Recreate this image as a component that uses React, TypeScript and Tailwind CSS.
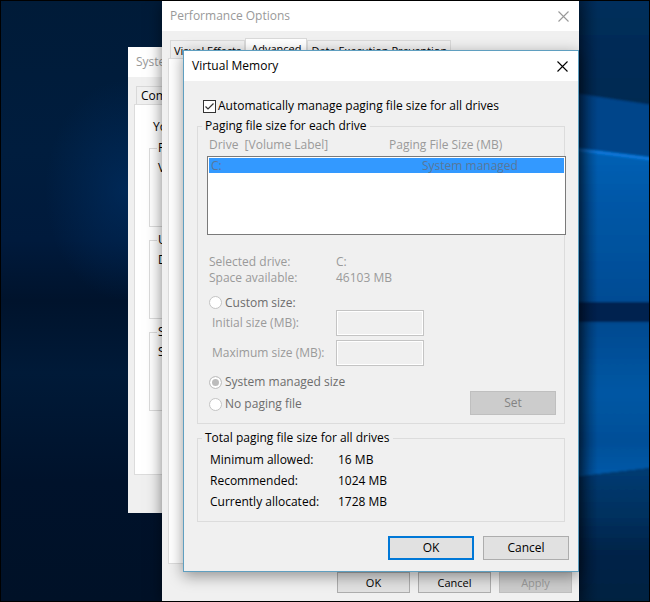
import { useState } from 'react';
import type { ReactNode } from 'react';

function Wallpaper() {
  return (
    <svg
      className="absolute inset-0 h-full w-full"
      viewBox="0 0 650 602"
      preserveAspectRatio="none"
      aria-hidden="true"
    >
      <defs>
        <linearGradient id="left" x1="0" y1="0" x2="0" y2="1">
          <stop offset="0" stopColor="#001b38" />
          <stop offset="0.25" stopColor="#001d3e" />
          <stop offset="0.4" stopColor="#001a3c" />
          <stop offset="0.5" stopColor="#00132c" />
          <stop offset="0.62" stopColor="#001a38" />
          <stop offset="0.8" stopColor="#00122b" />
          <stop offset="1" stopColor="#001127" />
        </linearGradient>
        <radialGradient id="leftGlow" cx="0.5" cy="0.5" r="0.5">
          <stop offset="0" stopColor="#003066" stopOpacity="0.6" />
          <stop offset="1" stopColor="#003066" stopOpacity="0" />
        </radialGradient>
        <linearGradient id="sky" x1="0" y1="0" x2="0" y2="1">
          <stop offset="0" stopColor="#002f5c" />
          <stop offset="1" stopColor="#002850" />
        </linearGradient>
        <linearGradient id="paneTop" x1="0" y1="0" x2="0" y2="1">
          <stop offset="0" stopColor="#0061b6" />
          <stop offset="0.4" stopColor="#0057a6" />
          <stop offset="1" stopColor="#004c94" />
        </linearGradient>
        <linearGradient id="paneBottom" x1="0" y1="0" x2="0" y2="1">
          <stop offset="0" stopColor="#004a90" />
          <stop offset="0.45" stopColor="#0057a4" />
          <stop offset="0.75" stopColor="#004f98" />
          <stop offset="0.95" stopColor="#0059a8" />
          <stop offset="1" stopColor="#0064b8" />
        </linearGradient>
        <linearGradient id="floor" x1="0" y1="0" x2="0" y2="1">
          <stop offset="0" stopColor="#003c74" />
          <stop offset="0.35" stopColor="#00305e" />
          <stop offset="0.6" stopColor="#002448" />
          <stop offset="1" stopColor="#001f40" />
        </linearGradient>
        <linearGradient id="edge" x1="0" y1="0" x2="1" y2="0">
          <stop offset="0" stopColor="#000a1c" stopOpacity="0.4" />
          <stop offset="1" stopColor="#000a1c" stopOpacity="0" />
        </linearGradient>
        <filter id="soften">
          <feGaussianBlur stdDeviation="1" />
        </filter>
      </defs>
      <rect width="650" height="602" fill="url(#left)" />
      <ellipse cx="125" cy="190" rx="80" ry="110" fill="url(#leftGlow)" />
      <g filter="url(#soften)">
        <rect x="540" y="-5" width="120" height="120" fill="url(#sky)" />
        <path d="M540 88 L660 106 V302 H540 Z" fill="#00458a" />
        <path d="M540 144 L660 159 V302 H540 Z" fill="url(#paneTop)" />
        <path d="M540 145 L660 160" stroke="#0a78dc" strokeWidth="3" />
        <rect x="540" y="302" width="120" height="20" fill="#002450" />
        <path d="M540 322 H660 V467 L540 481 Z" fill="url(#paneBottom)" />
        <path d="M540 481 L660 467 V610 H540 Z" fill="url(#floor)" />
      </g>
      <rect x="578" width="20" height="602" fill="url(#edge)" />
    </svg>
  );
}

function CloseButton({ muted = false }: { muted?: boolean }) {
  return (
    <button
      type="button"
      aria-label="Close"
      className={muted ? 'p-1 text-[#999999]' : 'p-1 text-black'}
    >
      <svg width="11" height="11" viewBox="0 0 11 11" fill="none" stroke="currentColor">
        <path d="M0.5 0.5 L10.5 10.5 M10.5 0.5 L0.5 10.5" strokeWidth="1.1" />
      </svg>
    </button>
  );
}

function Group({ title, className, children }: { title: string; className: string; children: ReactNode }) {
  return (
    <fieldset className={`min-w-0 border border-[#dcdcdc] pl-1 ${className}`}>
      <legend className="px-[3px] leading-5">{title}</legend>
      {children}
    </fieldset>
  );
}

function SystemGroup({ title, item }: { title: string; item: string }) {
  return (
    <fieldset className="mb-[3px] h-[89px] border border-[#dcdcdc] pl-[7px]">
      <legend className="px-px leading-5">{title}</legend>
      <p className="pl-px leading-5">{item}</p>
    </fieldset>
  );
}

function SystemProperties() {
  return (
    <section className="absolute left-32 top-[47px] w-96 bg-[#f0f0f0] pb-[38px]">
      <header className="flex h-[30px] items-center bg-white pl-2 text-[#999999]">
        System Properties
      </header>
      <div className="px-[6px] pt-[9px]">
        <div className="flex pl-[2px]">
          <button type="button" className="h-[18px] border border-b-0 border-[#d9d9d9] px-1 leading-4">
            Computer Name
          </button>
        </div>
        <div className="h-[371px] border border-[#dcdcdc] bg-white px-[14px] pt-3">
          <p className="mb-px pl-1 leading-5">You must be logged on</p>
          <SystemGroup title="Performance" item="Visual effects" />
          <SystemGroup title="User Profiles" item="Desktop settings" />
          <SystemGroup title="Startup and Recovery" item="System startup" />
        </div>
      </div>
    </section>
  );
}

function PerformanceOptions() {
  return (
    <section className="absolute left-[162px] top-px w-[417px] bg-[#f0f0f0] pb-2 shadow-[0_2px_14px_rgba(0,0,0,0.5)]">
      <header className="flex h-[30px] items-center justify-between bg-white pl-2 pr-[6px] text-[#999999]">
        <h2>Performance Options</h2>
        <CloseButton muted />
      </header>
      <div className="px-[6px] pt-[7px] text-[11px]">
        <nav className="flex items-end pl-[2px]">
          <button type="button" className="h-[18px] border border-b-0 border-[#d9d9d9] px-[3px] leading-5">
            Visual Effects
          </button>
          <button type="button" className="h-5 border border-b-0 border-[#d9d9d9] bg-white px-[5px] leading-5">
            Advanced
          </button>
          <button type="button" className="h-[18px] border border-b-0 border-[#d9d9d9] px-[3px] leading-5">
            Data Execution Prevention
          </button>
        </nav>
        <div className="h-[506px] border border-[#dcdcdc] bg-white" />
        <div className="flex justify-end gap-2 pr-px pt-[8px]">
          <button type="button" className="h-[21px] w-[73px] border border-[#adadad] bg-[#e1e1e1]">OK</button>
          <button type="button" className="h-[21px] w-[73px] border border-[#adadad] bg-[#e1e1e1]">Cancel</button>
          <button type="button" disabled className="h-[21px] w-[73px] border border-[#bfbfbf] bg-[#cccccc] text-[#9a9a9a]">
            Apply
          </button>
        </div>
      </div>
    </section>
  );
}

const radioClass =
  'size-[13px] shrink-0 appearance-none rounded-full border border-[#c4c4c4] bg-white checked:shadow-[inset_0_0_0_2px_white] checked:bg-[#bcbcbc]';

const totals = [
  ['Minimum allowed:', '16 MB'],
  ['Recommended:', '1024 MB'],
  ['Currently allocated:', '1728 MB'],
];

function VirtualMemory() {
  const [auto, setAuto] = useState(true);
  const [mode, setMode] = useState('system');

  return (
    <section
      role="dialog"
      aria-labelledby="vm-title"
      className="absolute left-[183px] top-[50px] w-[396px] border border-[#5f9fc0] bg-[#f0f0f0] shadow-[0_4px_14px_rgba(0,0,0,0.4)]"
    >
      <header className="flex h-[30px] items-center justify-between bg-white pl-2 pr-[6px]">
        <h1 id="vm-title">Virtual Memory</h1>
        <CloseButton />
      </header>

      <div className="px-[13px] pt-[15px]">
        <div className="flex h-5 items-center gap-[2px] pl-[6px]">
          <span className="relative flex size-[13px]">
            <input
              id="auto"
              type="checkbox"
              checked={auto}
              onChange={(e) => setAuto(e.target.checked)}
              className="size-[13px] appearance-none border border-[#333333] bg-white"
            />
            {auto && (
              <svg viewBox="0 0 13 13" className="pointer-events-none absolute inset-0" fill="none" stroke="#333333">
                <path d="M2.5 6.5 L5 9 L10.5 3.5" strokeWidth="1.2" />
              </svg>
            )}
          </span>
          <label htmlFor="auto">Automatically manage paging file size for all drives</label>
        </div>

        {/* Per-drive settings, greyed out while Windows manages them */}
        <Group title="Paging file size for each drive" className="pb-2">
          <div className="pl-[5px] text-[#9a9a9a]">
            <table className="-mr-[2px] block">
              <thead className="block pb-[2px]">
                <tr className="grid h-[18px] grid-cols-[180px_1fr] items-center pl-[2px] text-left">
                  <th className="whitespace-pre font-normal">Drive  [Volume Label]</th>
                  <th className="font-normal">Paging File Size (MB)</th>
                </tr>
              </thead>
              <tbody className="block h-[79px] border border-[#7a7a7a] bg-white p-px">
                <tr className="grid h-[15px] grid-cols-[211px_1fr] items-center bg-[#3399ff] pl-[2px] leading-[15px] text-[#58779a]">
                  <td>C:</td>
                  <td>System managed</td>
                </tr>
              </tbody>
            </table>

            <dl className="mt-[19px] grid grid-cols-[127px_1fr] pl-[2px] leading-4">
              <dt>Selected drive:</dt>
              <dd>C:</dd>
              <dt>Space available:</dt>
              <dd>46103 MB</dd>
            </dl>

            <div className="mt-[9px] flex h-[15px] items-center gap-[3px] pl-[2px] text-[#6d6d6d]">
              <input id="custom" type="radio" name="mode" disabled={auto} checked={mode === 'custom'} onChange={() => setMode('custom')} className={radioClass} />
              <label htmlFor="custom">Custom size:</label>
            </div>
            <div className="grid grid-cols-[124px_88px] items-center gap-y-1 pl-[5px]">
              <label htmlFor="initial">Initial size (MB):</label>
              <input id="initial" type="text" disabled={auto} className="h-[26px] border border-[#c4c4c4] px-1 shadow-[inset_0_0_0_1px_white]" />
              <label htmlFor="maximum">Maximum size (MB):</label>
              <input id="maximum" type="text" disabled={auto} className="h-[26px] border border-[#c4c4c4] px-1 shadow-[inset_0_0_0_1px_white]" />
            </div>

            <div className="mt-2 flex items-end justify-between pl-[2px] pr-2 text-[#6d6d6d]">
              <div className="flex flex-col gap-[6px] pb-[3px]">
                <div className="flex h-4 items-center gap-[3px]">
                  <input id="system" type="radio" name="mode" disabled={auto} checked={mode === 'system'} onChange={() => setMode('system')} className={radioClass} />
                  <label htmlFor="system">System managed size</label>
                </div>
                <div className="flex h-4 items-center gap-[3px]">
                  <input id="none" type="radio" name="mode" disabled={auto} checked={mode === 'none'} onChange={() => setMode('none')} className={radioClass} />
                  <label htmlFor="none">No paging file</label>
                </div>
              </div>
              <button type="button" disabled={auto} className="h-6 w-[86px] border border-[#bfbfbf] bg-[#cccccc] text-[#838383]">
                Set
              </button>
            </div>
          </div>
        </Group>

        <Group title="Total paging file size for all drives" className="mt-1 pb-[9px]">
          <dl className="grid grid-cols-[128px_1fr] pl-2 pt-px leading-[21px]">
            {totals.map(([label, value]) => (
              <div key={label} className="contents">
                <dt>{label}</dt>
                <dd>{value}</dd>
              </div>
            ))}
          </dl>
        </Group>
      </div>

      <footer className="flex justify-end gap-[9px] px-[9px] pb-[11px] pt-[14px]">
        <button type="button" className="h-6 w-[86px] border-2 border-[#0078d7] bg-[#e1e1e1]">OK</button>
        <button type="button" className="h-6 w-[86px] border border-[#adadad] bg-[#e1e1e1]">Cancel</button>
      </footer>
    </section>
  );
}

export default function App() {
  return (
    <main className="relative min-h-screen overflow-hidden bg-[#001b38] font-['Open_Sans','Noto_Sans',sans-serif] text-[12px] leading-4 text-black">
      <Wallpaper />
      <SystemProperties />
      <PerformanceOptions />
      <VirtualMemory />
      <div className="pointer-events-none absolute inset-0 border border-black" />
    </main>
  );
}
